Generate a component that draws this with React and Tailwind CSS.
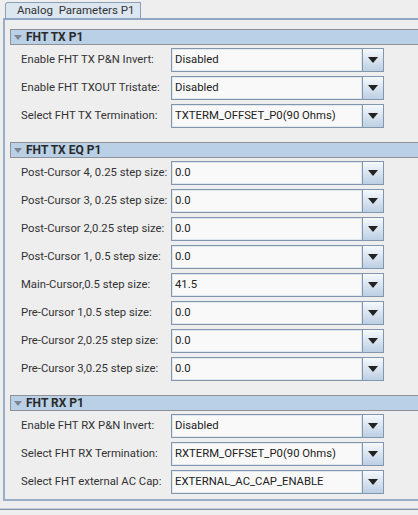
import React from "react";

function Combo({ value }) {
  return (
    <div className="flex h-[24px] w-[213px]">
      <div className="flex-1 flex items-center border border-[#8296ae] bg-[#f9f9f9] pl-[3px] shadow-[inset_0_0_0_1px_#dfe6ee] text-[11.3px] text-[#222] leading-none whitespace-pre">
        {value}
      </div>
      <div className="w-[21px] border border-l-0 border-[#8296ae] bg-gradient-to-b from-[#f6f9fc] to-[#bccfe4] flex items-center justify-center">
        <svg width="10" height="6" viewBox="0 0 10 6">
          <polygon points="0,0 10,0 5,6" fill="#222" />
        </svg>
      </div>
    </div>
  );
}

function Row({ label, value }) {
  return (
    <div className="flex items-center h-[24px]">
      <div className="w-[161px] pl-[11px] text-[11.3px] text-[#333] whitespace-pre leading-none">{label}</div>
      <Combo value={value} />
    </div>
  );
}

function Header({ title }) {
  return (
    <div className="h-[16px] w-[420px] border border-r-0 border-[#8e9196] bg-[#b9d0e6] flex items-center">
      <svg width="8" height="5" viewBox="0 0 8 5" className="ml-[3px] mr-[4px]">
        <polygon points="0,0 8,0 4,5" fill="#7d8590" />
      </svg>
      <span className="text-[12px] font-bold text-[#2a2a2a] leading-none">{title}</span>
    </div>
  );
}

function Section({ title, rows }) {
  return (
    <div className="flex flex-col">
      <Header title={title} />
      <div className="flex flex-col gap-[4px] mt-[3px]">
        {rows.map((r, i) => (
          <Row key={i} label={r[0]} value={r[1]} />
        ))}
      </div>
    </div>
  );
}

export default function App() {
  return (
    <div
      className="relative w-[418px] h-[515px] bg-[#eeeeee] overflow-hidden"
      style={{ fontFamily: 'Roboto, "Noto Sans", sans-serif' }}
    >
      <div className="h-[18px] flex items-end">
        <div className="ml-[5px] h-[16px] w-[136px] border border-b-0 border-[#8e9eb3] rounded-tl-[3px] bg-[#dbe6f1] flex items-center pl-[11px] text-[11.5px] text-[#333] leading-none whitespace-pre">
          Analog  Parameters P1
        </div>
      </div>
      <div className="ml-[3px] w-[420px] border-t-2 border-l-2 border-b-2 border-t-[#8ea6c4] border-l-[#9aaec6] border-b-[#9aaec6] h-[483px] pl-[5px] pt-[9px] flex flex-col gap-[14px]">
        <Section
          title="FHT TX P1"
          rows={[
            ["Enable FHT TX P&N Invert:", "Disabled"],
            ["Enable FHT TXOUT Tristate:", "Disabled"],
            ["Select FHT TX Termination:", "TXTERM_OFFSET_P0(90 Ohms)"],
          ]}
        />
        <Section
          title="FHT TX EQ P1"
          rows={[
            ["Post-Cursor 4, 0.25 step size:", "0.0"],
            ["Post-Cursor 3, 0.25 step size:", "0.0"],
            ["Post-Cursor 2,0.25 step size:", "0.0"],
            ["Post-Cursor 1, 0.5 step size:", "0.0"],
            ["Main-Cursor,0.5 step size:", "41.5"],
            ["Pre-Cursor 1,0.5 step size:", "0.0"],
            ["Pre-Cursor 2,0.25 step size:", "0.0"],
            ["Pre-Cursor 3,0.25 step size:", "0.0"],
          ]}
        />
        <Section
          title="FHT RX P1"
          rows={[
            ["Enable FHT RX P&N Invert:", "Disabled"],
            ["Select FHT RX Termination:", "RXTERM_OFFSET_P0(90 Ohms)"],
            ["Select FHT external AC Cap:", "EXTERNAL_AC_CAP_ENABLE"],
          ]}
        />
      </div>
      <div className="mt-[7px] h-[2px] w-full border-t border-t-[#bcd0e6] border-b border-b-[#8e9196]" />
    </div>
  );
}
